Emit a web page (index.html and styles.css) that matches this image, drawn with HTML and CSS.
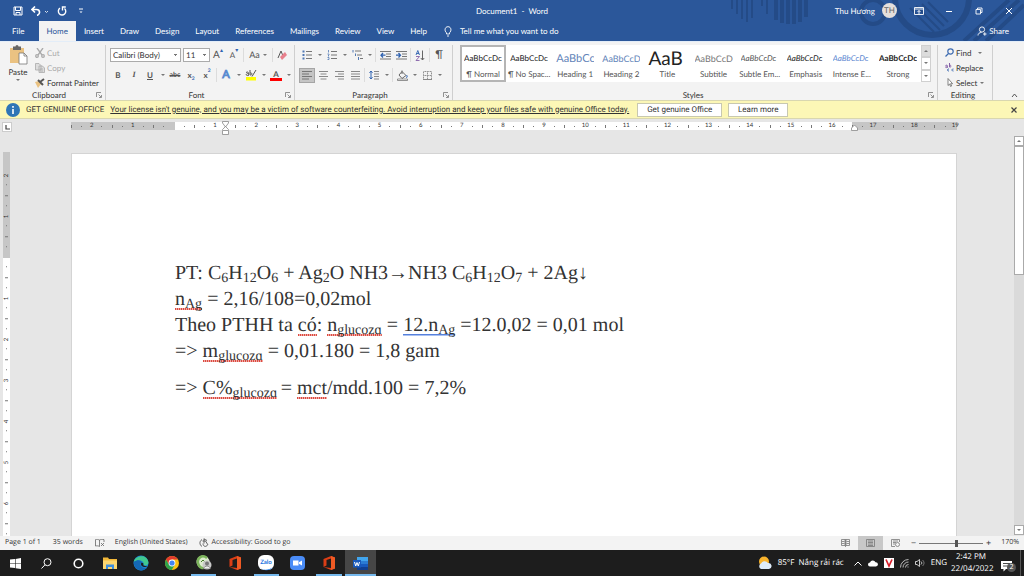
FILE: index.html
```html
<!DOCTYPE html>
<html lang="en">

<head>
    <meta charset="utf-8">
    <title>Document1 - Word</title>
    <link rel="stylesheet" href="styles.css">
    <script src="script.js" defer></script>
</head>

<body>
    <header class="header">
        <svg class="header-art" width="300" height="41" viewBox="0 0 300 41" fill="none" stroke="#244b87">
            <path d="M8 0v9M13 0v14M18 0v19M23 0v22M28 0v18M38 0v6M43 0v14" stroke-width="2" />
            <path d="M52 0v20M58 0v23M64 0v24M70 0v24M76 0v22M82 0v17" stroke-width="4" />
            <circle cx="149" cy="12" r="12" stroke-width="4" />
            <circle cx="208" cy="-2" r="37" stroke-width="6" />
            <path d="M186 8l24 24M192 6l24 24M198 4l22 22M204 2l20 20" stroke-width="2" />
            <path d="M240 41L285 0M250 41L295 0M262 41L300 5" stroke-width="4" />
        </svg>

        <div class="title-bar">
            <div class="quick-access">
                <button class="quick-btn" aria-label="Save">
                    <svg width="10" height="10" viewBox="0 0 10 10" fill="none" stroke="#fff"><path d="M1 1h8v8H1zM2.500 1v3.500h5V1M3 9V6.500h4V9" /></svg>
                </button>
                <button class="quick-btn" aria-label="Undo">
                    <svg width="18" height="10" viewBox="0 0 18 10" fill="none" stroke="#fff"><path d="M4 .5L1 3.500l3 3M1 3.500h4.500c4 0 4 5 .5 6" stroke-width="1.600" /><path d="M14 5l1.500 1.500L17 5" stroke-width=".8" /></svg>
                </button>
                <button class="quick-btn" aria-label="Repeat">
                    <svg width="10" height="10" viewBox="0 0 10 10" fill="none" stroke="#fff" stroke-width="1.400"><path d="M3 2.200a3.700 3.700 0 1 0 4.500.3M8.800 1H5.500v3.500" /></svg>
                </button>
                <button class="quick-btn quick-more" aria-label="Customize">
                    <svg width="6" height="6" viewBox="0 0 6 6" stroke="#fff" fill="#fff"><path d="M1 1h4" /><path d="M1.500 3.500h3L3 5z" stroke="none" /></svg>
                </button>
            </div>
            <h1 class="doc-title">Document1&nbsp; -&nbsp; Word</h1>
            <div class="account">
                <span>Thu Hương</span>
                <span class="avatar">TH</span>
                <button class="window-btn" aria-label="Ribbon display options">
                    <svg width="10" height="8" viewBox="0 0 10 8" fill="none" stroke="#fff" stroke-width=".9"><path d="M.5.5h9v7h-9zM.5 2h9M5 7V3.500M3.500 5L5 3.500 6.500 5" /></svg>
                </button>
                <button class="window-btn" aria-label="Minimize">
                    <svg width="8" height="8" viewBox="0 0 8 8" stroke="#fff"><path d="M1 4.500h6" /></svg>
                </button>
                <button class="window-btn" aria-label="Restore">
                    <svg width="8" height="8" viewBox="0 0 8 8" fill="none" stroke="#fff" stroke-width=".9"><path d="M1 2.500h4.500V7H1zM2.500 2.500V1H7v4.500H5.500" /></svg>
                </button>
                <button class="window-btn" aria-label="Close">
                    <svg width="8" height="8" viewBox="0 0 8 8" stroke="#fff"><path d="M1 1l6 6M7 1L1 7" /></svg>
                </button>
            </div>
        </div>

        <nav class="tabs">
            <a class="tab tab-file" href="#">File</a>
            <a class="tab tab-active" href="#">Home</a>
            <a class="tab" href="#">Insert</a>
            <a class="tab" href="#">Draw</a>
            <a class="tab" href="#">Design</a>
            <a class="tab" href="#">Layout</a>
            <a class="tab" href="#">References</a>
            <a class="tab" href="#">Mailings</a>
            <a class="tab" href="#">Review</a>
            <a class="tab" href="#">View</a>
            <a class="tab" href="#">Help</a>
            <button class="tell-me">
                <svg width="8" height="11" viewBox="0 0 8 11" fill="none" stroke="#fff" stroke-width=".9"><path d="M2.500 8V6.800C.2 5 .6.7 4 .7s3.800 4.300 1.500 6.100V8zM3 10h2" /></svg>
                Tell me what you want to do
            </button>
            <button class="share">
                <svg width="10" height="10" viewBox="0 0 10 10" fill="none" stroke="#fff" stroke-width=".9"><circle cx="5" cy="3.500" r="2.600" /><path d="M1 9.500c0-2 1.500-3 3.500-3M6 8h3.500M7.800 6.200v3.500" /></svg>
                Share
            </button>
        </nav>
    </header>

    <section class="ribbon">
        <div class="group group-clipboard">
            <div class="group-body clipboard-body">
                <button class="paste">
                    <svg width="20" height="20" viewBox="0 0 20 20"><path d="M2 3h14v15H2z" fill="#eac282" /><path d="M5 1.500h2.500a1.500 1.500 0 0 1 3 0H13V5H5z" fill="#666" /><path d="M11 8h5l3 3v8h-8z" fill="#fff" stroke="#777" stroke-width=".8" /><path d="M16 8v3h3" fill="none" stroke="#777" stroke-width=".8" /></svg>
                    <span>Paste</span>
                    <i class="caret"></i>
                </button>
                <div class="clipboard-list">
                    <button class="row-btn" disabled>
                        <svg width="10" height="10" viewBox="0 0 10 10" fill="none" stroke="#aaa" stroke-width="1.300"><path d="M2 0l5 7M8 0L3 7" /><circle cx="2" cy="8" r="1.300" /><circle cx="8" cy="8" r="1.300" /></svg>
                        Cut
                    </button>
                    <button class="row-btn" disabled>
                        <svg width="10" height="10" viewBox="0 0 10 10" fill="#ddd" stroke="#aaa" stroke-width=".8"><path d="M.5.5H4l2 2V7H.5zM4 3h3.500l2 2v4.500H4z" /><path d="M5 6h3M5 8h3" /></svg>
                        Copy
                    </button>
                    <button class="row-btn">
                        <svg width="10" height="10" viewBox="0 0 10 10"><path d="M0 4l4-1 2 3-3 4z" fill="#eac282" /><path d="M3 2l5 5M5 4l4-3" stroke="#555" stroke-width="2" /></svg>
                        Format Painter
                    </button>
                </div>
            </div>
            <div class="group-label">Clipboard<svg class="launcher" viewBox="0 0 6 6"><path d="M.5 5V.5H5M2.500 2.500L5 5M5.500 3v2.500H3" /></svg></div>
        </div>

        <div class="group group-font">
            <div class="group-body">
                <div class="tools">
                    <select class="combo combo-font" aria-label="Font">
                        <option>Calibri (Body)</option>
                    </select>
                    <select class="combo combo-size" aria-label="Font size">
                        <option>11</option>
                    </select>
                    <button class="tool tool-grow">A<sup>▴</sup></button>
                    <button class="tool tool-shrink">A<sup>▾</sup></button>
                    <i class="sep"></i>
                    <button class="tool tool-case">Aa <i class="caret"></i></button>
                    <i class="sep"></i>
                    <button class="tool" aria-label="Clear formatting">
                        <svg width="11" height="11" viewBox="0 0 11 11"><path d="M1 8L4 1l2 5" fill="none" stroke="#555" /><path d="M3 7l5-5 2 3-5 5z" fill="#e8808c" /></svg>
                    </button>
                </div>
                <div class="tools">
                    <button class="tool bold">B</button>
                    <button class="tool italic">I</button>
                    <button class="tool underline">U</button>
                    <button class="tool tool-drop" aria-label="Underline style"><i class="caret"></i></button>
                    <button class="tool strike">abc</button>
                    <button class="tool script">x<sub>2</sub></button>
                    <button class="tool script">x<sup>2</sup></button>
                    <i class="sep"></i>
                    <button class="tool effects">A</button>
                    <button class="tool tool-drop" aria-label="Text effects"><i class="caret"></i></button>
                    <button class="tool" aria-label="Highlight">
                        <svg width="12" height="12" viewBox="0 0 12 12"><path d="M1 8h10v3.500H1z" fill="#ff0" /><path d="M1 3.500c3-1.500 2.500 1 2.500 3M3.500 4.500c-3 0-3 2.500 0 2M5 1v5c3 .5 2-3 0-2M11 1L7 7.500" fill="none" stroke="#555" /></svg>
                    </button>
                    <button class="tool tool-drop" aria-label="Highlight color"><i class="caret"></i></button>
                    <button class="tool font-color">A</button>
                    <button class="tool tool-drop" aria-label="Font color"><i class="caret"></i></button>
                </div>
            </div>
            <div class="group-label">Font<svg class="launcher" viewBox="0 0 6 6"><path d="M.5 5V.5H5M2.500 2.500L5 5M5.500 3v2.500H3" /></svg></div>
        </div>

        <div class="group group-paragraph">
            <div class="group-body">
                <div class="tools">
                    <button class="tool" aria-label="Bullets">
                        <svg width="10" height="10" viewBox="0 0 10 10"><path d="M4 1.500h6M4 5h6M4 8.500h6" stroke="#777" /><path d="M.5.5h2v2h-2zM.5 4h2v2h-2zM.5 7.500h2v2h-2z" fill="#5078b4" /></svg>
                    </button>
                    <button class="tool tool-drop" aria-label="Bullet library"><i class="caret"></i></button>
                    <button class="tool" aria-label="Numbering">
                        <svg width="10" height="10" viewBox="0 0 10 10"><path d="M4 1.500h6M4 5h6M4 8.500h6" stroke="#777" /><path d="M1.500 0v2.500M.5 4h1.500v1l-1 1h1M.5 7.500h1.500v2H.5" fill="none" stroke="#5078b4" stroke-width=".8" /></svg>
                    </button>
                    <button class="tool tool-drop" aria-label="Numbering library"><i class="caret"></i></button>
                    <button class="tool" aria-label="Multilevel list">
                        <svg width="11" height="10" viewBox="0 0 11 10"><path d="M3 1h6M5 5h5M8 8.500h3" stroke="#777" /><path d="M1 0v2.500M3.500 3.500V6M6.500 7v3" stroke="#5078b4" /></svg>
                    </button>
                    <button class="tool tool-drop" aria-label="List library"><i class="caret"></i></button>
                    <i class="sep"></i>
                    <button class="tool" aria-label="Decrease indent">
                        <svg width="11" height="9" viewBox="0 0 11 9"><path d="M0 .5h11M6 3h5M6 5.500h5M0 8h11" stroke="#777" /><path d="M5.500 4.200H1M3 2L1 4.200l2 2.300" fill="none" stroke="#2f62b0" stroke-width="1.300" /></svg>
                    </button>
                    <button class="tool" aria-label="Increase indent">
                        <svg width="11" height="9" viewBox="0 0 11 9"><path d="M0 .5h11M6 3h5M6 5.500h5M0 8h11" stroke="#777" /><path d="M0 4.200h4.500M2.500 2l2 2.200-2 2.300" fill="none" stroke="#2f62b0" stroke-width="1.300" /></svg>
                    </button>
                    <i class="sep"></i>
                    <button class="tool" aria-label="Sort">
                        <svg width="10" height="11" viewBox="0 0 10 11" fill="none"><path d="M1 5L2.800.5 4.500 5M1.500 3.500h2.500" stroke="#2f62b0" stroke-width=".9" /><path d="M1 6.500h3.500L1 10.500h3.500" stroke="#8560a8" stroke-width=".9" /><path d="M7.500.5v9.500M5.800 8l1.700 2 1.700-2" stroke="#666" /></svg>
                    </button>
                    <i class="sep"></i>
                    <button class="tool pilcrow">¶</button>
                </div>
                <div class="tools">
                    <button class="tool tool-on" aria-label="Align left">
                        <svg width="10" height="9" viewBox="0 0 10 9" stroke="#777"><path d="M0 .5h10M0 3h7M0 5.500h10M0 8h7" /></svg>
                    </button>
                    <button class="tool" aria-label="Center">
                        <svg width="9" height="9" viewBox="0 0 9 9" stroke="#888"><path d="M0 .5h9M1.500 3h6M0 5.500h9M1.500 8h6" /></svg>
                    </button>
                    <button class="tool" aria-label="Align right">
                        <svg width="9" height="9" viewBox="0 0 9 9" stroke="#888"><path d="M0 .5h9M3 3h6M0 5.500h9M3 8h6" /></svg>
                    </button>
                    <button class="tool" aria-label="Justify">
                        <svg width="9" height="9" viewBox="0 0 9 9" stroke="#888"><path d="M0 .5h9M0 3h9M0 5.500h9M0 8h9" /></svg>
                    </button>
                    <i class="sep"></i>
                    <button class="tool" aria-label="Line spacing">
                        <svg width="10" height="10" viewBox="0 0 10 10" fill="none"><path d="M5 1.500h5M5 4h5M5 6.500h5M5 9h5" stroke="#888" /><path d="M2 1v8M.5 2.800L2 1l1.500 1.800M.5 7.200L2 9l1.500-1.800" stroke="#2f62b0" /></svg>
                    </button>
                    <button class="tool tool-drop" aria-label="Spacing options"><i class="caret"></i></button>
                    <i class="sep"></i>
                    <button class="tool" aria-label="Shading">
                        <svg width="11" height="11" viewBox="0 0 11 11" fill="none" stroke="#666"><path d="M5 1.500l4 4-4 3-3-3.500zM5 4V.5" /><path d="M9.500 5c1.500 2 .5 3-.5 2" stroke="#2f62b0" /><path d="M.5 9h10v1.500H.5z" fill="#fff" stroke-width=".7" /></svg>
                    </button>
                    <button class="tool tool-drop" aria-label="Shading color"><i class="caret"></i></button>
                    <button class="tool" aria-label="Borders">
                        <svg width="9" height="9" viewBox="0 0 9 9" fill="none" stroke="#888"><path d="M.5.5h8v8h-8zM4.500.5v8M.5 4.500h8" stroke-dasharray="1 .6" /><path d="M0 8.500h9" /></svg>
                    </button>
                    <button class="tool tool-drop" aria-label="Border options"><i class="caret"></i></button>
                </div>
            </div>
            <div class="group-label">Paragraph<svg class="launcher" viewBox="0 0 6 6"><path d="M.5 5V.5H5M2.500 2.500L5 5M5.500 3v2.500H3" /></svg></div>
        </div>

        <div class="group group-styles">
            <div class="group-body gallery">
                <button class="style style-on"><span class="sample">AaBbCcDc</span><span class="style-name">¶ Normal</span></button>
                <button class="style"><span class="sample">AaBbCcDc</span><span class="style-name">¶ No Spac...</span></button>
                <button class="style"><span class="sample heading-1">AaBbCc</span><span class="style-name">Heading 1</span></button>
                <button class="style"><span class="sample heading-2">AaBbCcD</span><span class="style-name">Heading 2</span></button>
                <button class="style"><span class="sample title">AaB</span><span class="style-name">Title</span></button>
                <button class="style"><span class="sample subtitle">AaBbCcD</span><span class="style-name">Subtitle</span></button>
                <button class="style"><span class="sample subtle">AaBbCcDc</span><span class="style-name">Subtle Em...</span></button>
                <button class="style"><span class="sample emphasis">AaBbCcDc</span><span class="style-name">Emphasis</span></button>
                <button class="style"><span class="sample intense">AaBbCcDc</span><span class="style-name">Intense E...</span></button>
                <button class="style"><span class="sample strong">AaBbCcDc</span><span class="style-name">Strong</span></button>
                <div class="gallery-nav">
                    <button aria-label="Row up" disabled><i class="caret caret-up"></i></button>
                    <button aria-label="Row down"><i class="caret"></i></button>
                    <button aria-label="More styles"><i class="caret caret-more"></i></button>
                </div>
            </div>
            <div class="group-label">Styles<svg class="launcher" viewBox="0 0 6 6"><path d="M.5 5V.5H5M2.500 2.500L5 5M5.500 3v2.500H3" /></svg></div>
        </div>

        <div class="group group-editing">
            <div class="group-body">
                <button class="row-btn">
                    <svg width="9" height="9" viewBox="0 0 9 9" fill="none" stroke="#3c6ab0" stroke-width="1.200"><circle cx="5.500" cy="3.500" r="2.700" /><path d="M3.500 5.500L.5 8.500" /></svg>
                    Find <i class="caret caret-far"></i>
                </button>
                <button class="row-btn">
                    <svg width="9" height="9" viewBox="0 0 9 9" fill="none"><path d="M.5 2.500c2-1 2 .5 2 2-3 .5-2-1.500 0-1.500M4.500 0v4c2 .5 2-2 0-2" stroke="#8560a8" /><path d="M4 6c-2-.5-2 2.500 0 2M8.500 6c-2-.5-2 2.500 0 2" stroke="#3c6ab0" /></svg>
                    Replace
                </button>
                <button class="row-btn">
                    <svg width="9" height="9" viewBox="0 0 9 9" fill="#fff" stroke="#666" stroke-width=".8"><path d="M3 .5v7l1.600-1.500 1 2.500 1-.5-1-2.300h2z" /></svg>
                    Select <i class="caret"></i>
                </button>
            </div>
            <div class="group-label">Editing</div>
        </div>
        <button class="collapse" aria-label="Collapse the ribbon">
            <svg width="7" height="5" viewBox="0 0 7 5" fill="none" stroke="#555"><path d="M1 4l2.500-3L6 4" /></svg>
        </button>
    </section>

    <section class="notice">
        <svg width="14" height="14" viewBox="0 0 14 14"><circle cx="7" cy="7" r="7" fill="#2e75b6" /><path d="M7 6v5M7 3v1.800" stroke="#fff" stroke-width="1.600" /></svg>
        <strong class="notice-title">GET GENUINE OFFICE</strong>
        <a class="notice-link" href="#">Your license isn't genuine, and you may be a victim of software counterfeiting. Avoid interruption and keep your files safe with genuine Office today.</a>
        <button class="notice-btn notice-btn-wide">Get genuine Office</button>
        <button class="notice-btn">Learn more</button>
        <button class="notice-close" aria-label="Close">
            <svg width="6" height="6" viewBox="0 0 6 6" stroke="#444" stroke-width="1.200"><path d="M.5.5l5 5M5.500.5l-5 5" /></svg>
        </button>
    </section>

    <main class="workspace">
        <div class="canvas">
            <div class="ruler-row">
                <button class="tab-stop" aria-label="Left tab">
                    <svg width="5" height="5" viewBox="0 0 5 5" fill="none" stroke="#444" stroke-width="1.200"><path d="M1 0v4h4" /></svg>
                </button>
                <div class="ruler">
                    <div class="ruler-scale" id="ruler"></div>
                    <svg class="marker marker-indent" viewBox="0 0 7 14"><path d="M.5.5h6v1.500L3.500 6 .5 2zM.5 9v-.5l3-3 3 3V9M.5 9.500h6v4h-6z" /></svg>
                    <svg class="marker marker-right" viewBox="0 0 7 14"><path d="M.5 9.500V7l3-3 3 3v2.500z" /></svg>
                </div>
            </div>
            <div class="document">
                <div class="side-ruler" id="side-ruler"></div>
                <article class="page" lang="vi">
                    <p>PT: C<sub>6</sub>H<sub>12</sub>O<sub>6</sub> + Ag<sub>2</sub>O NH3→NH3 C<sub>6</sub>H<sub>12</sub>O<sub>7</sub> + 2Ag↓</p>
                    <p><span class="spelling">n<sub>Ag</sub></span> = 2,16/108=0,02mol</p>
                    <p>Theo PTHH ta <span class="spelling">có</span>: <span class="spelling">n<sub>glucozɑ</sub></span> = <span class="grammar">12.n<sub>Ag</sub></span> =12.0,02 = 0,01 mol</p>
                    <p>=&gt; <span class="spelling">m<sub>glucozɑ</sub></span> = 0,01.180 = 1,8 gam</p>
                    <p class="spaced">=&gt; <span class="spelling">C%<sub>glucozɑ</sub></span><sub> </sub>= <span class="spelling">mct</span>/mdd.100 = 7,2%</p>
                </article>
            </div>
        </div>
        <div class="scrollbar">
            <button class="scroll-btn" aria-label="Scroll up"><i class="caret caret-up"></i></button>
            <div class="scroll-track"><div class="scroll-thumb"></div></div>
            <button class="scroll-btn" aria-label="Scroll down"><i class="caret"></i></button>
        </div>
    </main>

    <footer class="status">
        <span class="status-page">Page 1 of 1</span>
        <span class="status-words">35 words</span>
        <svg width="10" height="8" viewBox="0 0 10 8" fill="none" stroke="#666" stroke-width=".8"><path d="M4.500 7.500V1C3 .3 2 .3.500.6V7c1.500-.3 3-.2 4 .5zM4.500 1C6 .3 7 .3 9 .6V3M6 4l3 3M9 4L6 7" /></svg>
        <span class="status-lang">English (United States)</span>
        <svg width="10" height="10" viewBox="0 0 10 10" fill="none" stroke="#555" stroke-width=".9"><path d="M3 1.500C0 3.500.5 7 3 8.500M5 .5v5M3.500 3h3L9 7M4 5.500c0 3 3 4 4.500 1.500M5 1l3 1.500" /></svg>
        <span class="status-access">Accessibility: Good to go</span>
        <div class="views">
            <button class="view" aria-label="Read mode">
                <svg width="9" height="8" viewBox="0 0 9 8" fill="none" stroke="#777" stroke-width=".8"><path d="M.5.5h3.500v6H.5zM5 .5h3.500v6H5zM1 2.500h2.500M1 4.500h2.500M5.500 2.500H8M5.500 4.500H8M4.500 0v8" /></svg>
            </button>
            <button class="view view-on" aria-label="Print layout">
                <svg width="9" height="8" viewBox="0 0 9 8" fill="none" stroke="#777" stroke-width=".8"><path d="M.5.5h8v7h-8zM2 2h5M2 3.500h5M2 5h5M2 6.500h5" /></svg>
            </button>
            <button class="view" aria-label="Web layout">
                <svg width="9" height="8" viewBox="0 0 9 8" fill="none" stroke="#777" stroke-width=".8"><path d="M4 7.500H.5v-7h8V3M2 2h5M2 3.500h3M2 5h2" /><circle cx="6.500" cy="5.500" r="2" /></svg>
            </button>
        </div>
        <button class="zoom-step" aria-label="Zoom out">−</button>
        <input class="zoom" type="range" min="0" max="100" value="59" aria-label="Zoom">
        <button class="zoom-step" aria-label="Zoom in">+</button>
        <span class="zoom-value">170%</span>
    </footer>

    <div class="taskbar">
        <div class="apps">
            <button class="app" aria-label="Start">
                <svg width="11" height="11" viewBox="0 0 11 11" fill="#fff"><path d="M0 1.500L5 1v4.200H0zM5.600.9L11 0v5.200H5.600zM0 5.800h5V10l-5-.5zM5.600 5.800H11V11l-5.400-.8z" /></svg>
            </button>
            <button class="app" aria-label="Search">
                <svg width="11" height="11" viewBox="0 0 11 11" fill="none" stroke="#fff"><circle cx="6.500" cy="4.200" r="3.500" /><path d="M4 6.800L.5 10.500" /></svg>
            </button>
            <button class="app" aria-label="Cortana">
                <svg width="11" height="11" viewBox="0 0 11 11" fill="none" stroke="#fff" stroke-width="1.600"><circle cx="5.500" cy="5.500" r="4.300" /></svg>
            </button>
            <button class="app" aria-label="File Explorer">
                <svg width="14" height="12" viewBox="0 0 14 12"><path d="M0 .5h5l1 1.500h8v10H0z" fill="#f3b93a" /><path d="M0 3.500h14V12H0z" fill="#fcd670" /><path d="M3 12V7.500h8V12H9V10H5v2z" fill="#3d8ede" /></svg>
            </button>
            <button class="app" aria-label="Edge">
                <svg width="16" height="16" viewBox="0 0 16 16"><circle cx="8" cy="8" r="7.500" fill="#1b84d2" /><path d="M.7 7C2 0 14-1.500 15.400 7c.3 3-2.700 4-5 3C12 6 6 3.500.7 7z" fill="#41c98f" /><path d="M.7 7c4-3 8-1.500 8 .5-2.500 1-1.500 6 5 5.500C9 18 1 15 .7 7z" fill="#1468b4" /><path d="M8.700 7.500c-1.500 1.500-.5 4 2.500 4.500 2 .2 3-.6 3.500-1-2 .5-4 0-4.500-1 .6-1 .3-2-1.500-2.500z" fill="#1e1e1e" /></svg>
            </button>
            <button class="app" aria-label="Chrome">
                <svg width="14" height="14" viewBox="0 0 14 14"><circle cx="7" cy="7" r="7" fill="#fbc116" /><path d="M1 3.500A7 7 0 0 1 13 3.500H7L4 8.800z" fill="#e33b2e" /><path d="M1 3.500A7 7 0 0 0 6.700 14l3.200-5.200L4 8.700z" fill="#2ba24c" /><circle cx="7" cy="7" r="3.400" fill="#fff" /><circle cx="7" cy="7" r="2.600" fill="#4285f4" /></svg>
            </button>
            <button class="app app-open" aria-label="Coc Coc">
                <svg width="16" height="16" viewBox="0 0 16 16"><circle cx="7" cy="7" r="6.500" fill="#dceccf" /><path d="M11 3C6-1 1 3 2 8s5 6 7 4" fill="none" stroke="#7db55c" stroke-width="2.500" /><path d="M5 7l2-2 2 2" fill="none" stroke="#477b2c" /><circle cx="11" cy="10" r="4.500" fill="#c9c9c9" /><circle cx="11" cy="8.500" r="2" fill="#777" /><path d="M7.500 14c1-4 6-4 7 0z" fill="#eee" stroke="#555" stroke-width=".6" /></svg>
            </button>
            <button class="app" aria-label="Office">
                <svg width="12" height="14" viewBox="0 0 12 14"><path d="M8 0l4 1.500v11L8 14l-7.500-3L8 12V2.500L3.500 4v5.500L.5 11V3z" fill="#dc3e16" /><path d="M8 0l4 1.500v11L8 14z" fill="#ef5a24" /></svg>
            </button>
            <button class="app app-open" aria-label="Zalo">
                <svg width="16" height="16" viewBox="0 0 16 16"><rect x="0" y="0" width="16" height="15" rx="6" fill="#fff" /><path d="M1 11c2 5 10 4.500 14 1-2 4-11 5-14-1z" fill="#1a7cf0" /><text x="8" y="9" text-anchor="middle" class="zalo-text">Zalo</text></svg>
            </button>
            <button class="app" aria-label="Zoom">
                <svg width="15" height="14" viewBox="0 0 15 14"><rect width="15" height="14" rx="4" fill="#4a8cf7" /><path d="M3 4.500h5.500v5H3zM9 6.300l3-1.800v5L9 7.700z" fill="#fff" /></svg>
            </button>
            <button class="app app-open" aria-label="Office">
                <svg width="12" height="14" viewBox="0 0 12 14"><path d="M8 0l4 1.500v11L8 14l-7.500-3L8 12V2.500L3.500 4v5.500L.5 11V3z" fill="#dc3e16" /><path d="M8 0l4 1.500v11L8 14z" fill="#ef5a24" /></svg>
            </button>
            <button class="app app-open app-current" aria-label="Word">
                <svg width="15" height="13" viewBox="0 0 15 13"><path d="M4 0h11v4H4z" fill="#41a5ee" /><path d="M4 4h11v3H4z" fill="#2b7cd3" /><path d="M4 7h11v3H4z" fill="#185abd" /><path d="M4 10h11v3H4z" fill="#103f91" /><path d="M0 3h8v7.500H0z" fill="#185abd" /><path d="M1.500 5l1.200 4L4 5.500 5.300 9l1.200-4" fill="none" stroke="#fff" /></svg>
            </button>
        </div>
        <div class="tray">
            <button class="weather">
                <svg width="14" height="14" viewBox="0 0 14 14"><circle cx="6" cy="5.500" r="5" fill="#f8b32c" /><path d="M3 13a3 3 0 0 1 0-5.500 4 4 0 0 1 7-.5 3 3 0 0 1 1 6z" fill="#dfecf8" /></svg>
                <span>85°F&nbsp; Nắng rải rác</span>
            </button>
            <svg width="8" height="5" viewBox="0 0 8 5" fill="none" stroke="#fff"><path d="M.5 4.500L4 1l3.500 3.500" /></svg>
            <svg width="10" height="7" viewBox="0 0 10 7"><path d="M2 6.500a2 2 0 0 1 0-4 3 3 0 0 1 5.500-.3 2 2 0 0 1 .5 4.300z" fill="#fff" /></svg>
            <svg width="10" height="10" viewBox="0 0 10 10"><path d="M0 0h10v10H0z" fill="#fff" /><path d="M2 1.500l3 6.500 3-6.500" fill="none" stroke="#d8202c" stroke-width="1.700" /></svg>
            <svg width="9" height="9" viewBox="0 0 9 9" fill="none" stroke="#ccc" stroke-width=".9"><path d="M.5 8.500a8 8 0 0 1 8-8M3 8.500A5.500 5.500 0 0 1 8.500 3M5.500 8.500a3 3 0 0 1 3-3" /><path d="M7.500 8h1" /></svg>
            <svg width="10" height="8" viewBox="0 0 10 8" fill="none" stroke="#ddd" stroke-width=".9"><path d="M.5 2.500h1.500L4.500.5v7L2 5.500H.5zM6 2.500c1 1 1 2 0 3" /><path d="M7.500 1c2 2 2 4 0 6" stroke="#888" /></svg>
            <span class="lang">ENG</span>
            <div class="clock">
                <span>2:42 PM</span>
                <span>22/04/2022</span>
            </div>
            <button class="notifications" aria-label="Notifications">
                <svg width="11" height="11" viewBox="0 0 11 11"><path d="M0 0h11v8H5l-2.500 2.500V8H0z" fill="#fff" /><path d="M2 2.500h7M2 5h7" stroke="#1e1e1e" stroke-width=".8" /></svg>
                <span class="badge">2</span>
            </button>
        </div>
    </div>
</body>

</html>
```
FILE: styles.css
```css
* {
    box-sizing: border-box;
}

body {
    display: flex;
    flex-direction: column;
    min-height: 100vh;
    margin: 0;
    background: #e6e6e6;
    color: #333;
    font-family: Lato, "Open Sans", sans-serif;
    font-size: 8px;
    line-height: 10px;
    text-rendering: geometricPrecision;
}

button,
select {
    margin: 0;
    padding: 0;
    border: 0;
    background: none;
    color: inherit;
    font: inherit;
    text-rendering: inherit;
    white-space: nowrap;
}

a {
    color: inherit;
}

svg {
    display: block;
    flex: none;
}

.caret {
    display: inline-block;
    flex: none;
    border: 2px solid transparent;
    border-top-color: #777;
    border-bottom-width: 0;
}

.caret-up {
    border-width: 0 2px 2px;
    border-bottom-color: #777;
}

/* title bar and tabs */

.header {
    position: relative;
    overflow: hidden;
    background: #2b579a;
    color: #fff;
}

.header-art {
    position: absolute;
    top: 0;
    right: 0;
}

.title-bar {
    position: relative;
    display: grid;
    grid-template-columns: 1fr auto 1fr;
    align-items: center;
    height: 21px;
}

.quick-access {
    display: flex;
    align-items: center;
    gap: 8px;
    padding-left: 13px;
}

.quick-btn {
    display: flex;
}

.quick-more {
    margin-left: 3px;
}

.doc-title {
    margin: 0;
    font-size: 8px;
    font-weight: normal;
}

.account {
    display: flex;
    align-items: center;
    justify-content: flex-end;
}

.avatar {
    width: 15px;
    margin: 0 7px;
    border-radius: 50%;
    background: #e4dfdc;
    color: #666;
    line-height: 15px;
    text-align: center;
}

.window-btn {
    display: flex;
    justify-content: center;
    width: 30px;
}

.tabs {
    position: relative;
    display: flex;
    align-items: center;
    height: 20px;
}

.tab {
    padding: 0 8px;
    line-height: 20px;
    text-decoration: none;
}

.tab-file {
    padding: 0 14px 0 12px;
}

.tab-active {
    background: #f3f3f3;
    color: #2b579a;
}

.tell-me,
.share {
    display: flex;
    align-items: center;
    gap: 8px;
    padding-left: 9px;
}

.share {
    gap: 2px;
    margin-left: auto;
    padding-right: 15px;
}

/* ribbon */

.ribbon {
    display: flex;
    height: 59px;
    padding-top: 3px;
    border-top: 1px solid #e3edf8;
    background: #f3f3f3;
}

.group {
    display: flex;
    flex: none;
    flex-direction: column;
    justify-content: space-between;
    padding-left: 4px;
    border-right: 1px solid #cfcfcf;
}

.group-clipboard {
    width: 106px;
}

.group-font {
    width: 189px;
}

.group-paragraph {
    width: 158px;
}

.group-styles {
    flex: 1;
    min-width: 0;
    padding-left: 7px;
}

.group-editing {
    width: 55px;
    padding-left: 7px;
}

.group-label {
    position: relative;
    padding-right: 11px;
    text-align: center;
}

.launcher {
    position: absolute;
    right: 3px;
    top: 2px;
    width: 6px;
    height: 6px;
    fill: none;
    stroke: #777;
    stroke-width: .8;
}

.clipboard-body {
    display: flex;
    gap: 3px;
}

.paste {
    display: flex;
    flex-direction: column;
    align-items: center;
    width: 28px;
    gap: 2px;
}

.row-btn {
    display: flex;
    align-items: center;
    gap: 2px;
    height: 15px;
}

.row-btn:disabled {
    color: #aaa;
}

.row-btn .caret {
    margin-left: 1px;
}

.row-btn .caret-far {
    margin-left: 5px;
}

.tools {
    display: flex;
    align-items: center;
    height: 20px;
}

.tool {
    display: flex;
    flex: none;
    align-items: center;
    justify-content: center;
    width: 16px;
    height: 15px;
    color: #555;
}

.tool-drop {
    width: 9px;
}

.tool-on {
    border: 1px solid #a5a5a5;
    background: #c5c5c5;
}

.tool-case {
    gap: 3px;
    width: 26px;
    font-size: 9px;
}

.tool-grow {
    font-size: 10px;
}

.tool-grow sup,
.tool-shrink sup {
    align-self: flex-start;
    color: #2f62b0;
    font-size: 6px;
    line-height: 6px;
}

.sep {
    flex: none;
    width: 1px;
    height: 14px;
    margin: 0 1px;
    background: #dcdcdc;
}

.combo {
    height: 14px;
    padding: 0 2px;
    border: 1px solid #ababab;
    appearance: none;
    background-color: #fff;
    background-image: linear-gradient(#777, #777), linear-gradient(#777, #777);
    background-position: right 3px top 5px, right 4px top 6px;
    background-repeat: no-repeat;
    background-size: 3px 1px, 1px 1px;
}

.combo-font {
    width: 71px;
    margin-right: 2px;
}

.combo-size {
    width: 27px;
}

.bold,
.script {
    font-weight: bold;
}

.italic {
    font-style: italic;
    font-family: "Liberation Serif", serif;
    font-weight: bold;
}

.underline {
    font-weight: bold;
    text-decoration: underline;
}

.strike {
    font-size: 7px;
    font-weight: bold;
    text-decoration: line-through;
}

.script sub,
.script sup {
    color: #2f62b0;
    font-size: 5px;
    line-height: 7px;
}

.script sub {
    align-self: flex-end;
}

.script sup {
    align-self: flex-start;
}

.effects {
    color: #fff;
    font-size: 11px;
    -webkit-text-stroke: 1px #5b8bd0;
}

.font-color {
    width: 12px;
    height: 12px;
    margin: 0 2px;
    border-bottom: 3px solid #f00;
    font-weight: bold;
}

.pilcrow {
    font-size: 11px;
}

.gallery {
    display: flex;
    height: 37px;
}

.style {
    display: flex;
    flex: 1;
    flex-direction: column;
    align-items: center;
    justify-content: flex-end;
    min-width: 0;
    padding-bottom: 3px;
    background: #fff;
    color: #555;
}

.style-on {
    box-shadow: inset 0 0 0 2px #b5b5b5;
}

.sample {
    width: 38px;
    overflow: hidden;
    color: #222;
    line-height: 21px;
    text-align: left;
}

.heading-1 {
    color: #5f83b8;
    font-size: 11px;
}

.heading-2 {
    color: #5f83b8;
    font-size: 9px;
}

.title {
    font-size: 19px;
}

.subtitle {
    color: #777;
    font-size: 9px;
}

.subtle {
    color: #555;
    font-style: italic;
}

.emphasis {
    font-style: italic;
}

.intense {
    color: #5b86d0;
    font-style: italic;
}

.strong {
    font-weight: bold;
}

.gallery-nav {
    display: flex;
    flex: none;
    flex-direction: column;
    width: 10px;
    margin-right: 6px;
}

.gallery-nav button {
    display: flex;
    flex: 1;
    align-items: center;
    justify-content: center;
    border: 1px solid #d0d0d0;
    background: #fff;
}

.gallery-nav button:disabled {
    background: #dcdcdc;
}

.caret-more {
    box-shadow: 0 -2px 0 -1px #777;
}

.collapse {
    flex: none;
    align-self: flex-end;
    width: 31px;
    padding: 0 0 2px 18px;
}

/* licence notice */

.notice {
    display: flex;
    align-items: center;
    height: 19px;
    padding: 0 7px 0 6px;
    border: solid #d9d7b0;
    border-width: 1px 0;
    background: #fcf7b6;
    font-family: Roboto, sans-serif;
}

.notice-title {
    margin: 0 6px;
    font-weight: normal;
    white-space: nowrap;
}

.notice-link {
    margin-right: 8px;
    white-space: nowrap;
}

.notice-btn {
    width: 60px;
    height: 14px;
    border: 1px solid #c8c8b0;
    background: #fff;
}

.notice-btn-wide {
    width: 85px;
    margin-right: 6px;
}

.notice-close {
    margin-left: auto;
}

/* document area */

.workspace {
    display: flex;
    flex: 1;
}

.canvas {
    display: flex;
    flex: 1;
    flex-direction: column;
}

.ruler-row {
    display: flex;
    height: 34px;
    padding: 3px 57px 0 2px;
}

.tab-stop {
    display: flex;
    align-items: center;
    justify-content: center;
    width: 10px;
    height: 10px;
    margin-right: 59px;
    border: 1px solid #ccc;
    background: #fff;
}

.ruler {
    position: relative;
    flex: 1;
    height: 8px;
    background: linear-gradient(to right, #c6c6c6 11.700%, #fff 11.700%, #fff 88.200%, #c6c6c6 88.200%);
}

.ruler-scale {
    display: flex;
    height: 8px;
    margin: 0 -3px 0 -5px;
}

.tick {
    display: flex;
    flex: 1 1 0;
    align-items: center;
    justify-content: center;
    min-width: 0;
    min-height: 0;
    font-size: 6px;
    line-height: 8px;
}

.tick-half::before,
.tick-quarter::before {
    content: "";
    width: 1px;
    height: 3px;
    background: #777;
}

.tick-quarter::before {
    height: 1px;
}

.marker {
    position: absolute;
    top: -1px;
    left: 17%;
    width: 7px;
    height: 14px;
    fill: #fff;
    stroke: #888;
    stroke-width: .8;
}

.marker-right {
    left: 88%;
}

.document {
    display: flex;
    flex: 1;
    padding: 0 57px 0 3px;
}

.side-ruler {
    width: 7px;
    height: 384px;
    margin: -1px 61px -1px 0;
    padding-top: 18px;
    overflow: hidden;
    background: linear-gradient(#c6c6c6 106px, #fff 106px);
}

.side-ruler .centimetre {
    display: flex;
    flex-direction: column;
    height: 41px;
}

.side-ruler .tick {
    writing-mode: vertical-rl;
    transform: rotate(180deg);
    line-height: 7px;
}

.side-ruler .tick-half::before {
    width: 3px;
    height: 1px;
}

.side-ruler .tick-quarter::before {
    width: 1px;
    height: 1px;
}

.page {
    flex: 1;
    padding: 106px 103px 0;
    border: 1px solid #d4d4d4;
    border-bottom: 0;
    background: #fff;
    font-family: "Liberation Serif", "Times New Roman", serif;
    font-size: 20px;
    line-height: 26px;
}

.page p {
    margin: 0;
}

.page .spaced {
    margin-top: 11px;
}

.page sub {
    font-size: 14px;
    line-height: 0;
    vertical-align: -3px;
}

.spelling {
    background: repeating-linear-gradient(to right, #dc4a40 0 1px, #f0aaa5 1px 2px) bottom / 100% 2px no-repeat;
}

.grammar {
    background: linear-gradient(#5580dc 1px, #a9c0f0 1px) bottom / 100% 2px no-repeat;
}

.scrollbar {
    display: flex;
    flex-direction: column;
    width: 10px;
    margin: 17px 0 1px;
}

.scroll-btn {
    display: flex;
    align-items: center;
    justify-content: center;
    height: 10px;
    border: 1px solid #aaa;
    background: #fff;
}

.scroll-track {
    flex: 1;
    background: #dadada;
}

.scroll-thumb {
    height: 34%;
    border: 1px solid #aaa;
    background: #fff;
}

/* status bar */

.status {
    display: flex;
    align-items: center;
    height: 14px;
    padding: 0 5px;
    background: #f3f3f3;
    font-family: "Open Sans", sans-serif;
    font-size: 7px;
}

.status-words {
    margin: 0 12px;
}

.status-lang {
    margin: 0 11px 0 10px;
}

.status-access {
    margin-left: 3px;
}

.views {
    display: flex;
    align-self: stretch;
    margin-left: auto;
}

.view {
    display: flex;
    align-items: center;
    justify-content: center;
    width: 25px;
}

.view-on {
    background: #c8c8c8;
}

.zoom-step {
    width: 11px;
    font-size: 9px;
}

.zoom {
    width: 64px;
    height: 8px;
    margin: 0;
    appearance: none;
    background: linear-gradient(#777, #777) center / 100% 1px no-repeat;
}

.zoom::-webkit-slider-thumb {
    width: 3px;
    height: 7px;
    appearance: none;
    background: #555;
}

.zoom-value {
    width: 25px;
    text-align: right;
}

/* taskbar */

.taskbar {
    display: flex;
    justify-content: space-between;
    height: 26px;
    background: #1d1d1d;
    color: #fff;
}

.apps {
    display: grid;
    grid-template-columns: repeat(12, 1fr);
    width: 376px;
}

.app {
    display: flex;
    align-items: center;
    justify-content: center;
    margin: 0 3px;
    border-top: 2px solid transparent;
    border-bottom: 2px solid transparent;
}

.app-open {
    border-bottom-color: #76b9ed;
}

.app-current {
    margin: 0;
    border-top-color: #464646;
    background: #464646;
}

.zalo-text {
    fill: #1a6fe0;
    font-size: 6px;
    font-weight: bold;
}

.tray {
    display: flex;
    align-items: center;
    gap: 6px;
    padding-right: 3px;
    font-family: "Open Sans", sans-serif;
}

.weather {
    display: flex;
    align-items: center;
    gap: 6px;
    margin-right: 4px;
}

.clock {
    display: flex;
    flex-direction: column;
    width: 40px;
    margin-left: -2px;
    line-height: 12px;
    text-align: center;
}

.notifications {
    position: relative;
    width: 24px;
    height: 26px;
    padding: 7px 0 0 4px;
    border-right: 1px solid #555;
    text-align: left;
}

.badge {
    position: absolute;
    right: 4px;
    bottom: 4px;
    width: 9px;
    border-radius: 50%;
    background: #555;
    font-size: 7px;
    line-height: 9px;
    text-align: center;
}
```
FILE: script.js
```js
// quarter marks between two numbers, a longer one in the middle
function addTick(parent, quarter) {
    var tick = document.createElement("span");
    tick.className = "tick";
    if (quarter % 4 == 0) {
        if (quarter != 0) {
            tick.innerText = Math.abs(quarter / 4);
        }
    } else if (quarter % 2 == 0) {
        tick.className += " tick-half";
    } else {
        tick.className += " tick-quarter";
    }
    parent.appendChild(tick);
}

var ruler = document.getElementById("ruler");
for (var i = -10; i <= 76; i++) {
    addTick(ruler, i);
}

var sideRuler = document.getElementById("side-ruler");
for (var cm = -2; cm <= 6; cm++) {
    var cell = document.createElement("div");
    cell.className = "centimetre";
    for (var q = 0; q < 4; q++) {
        addTick(cell, cm * 4 + q);
    }
    sideRuler.appendChild(cell);
}
```
